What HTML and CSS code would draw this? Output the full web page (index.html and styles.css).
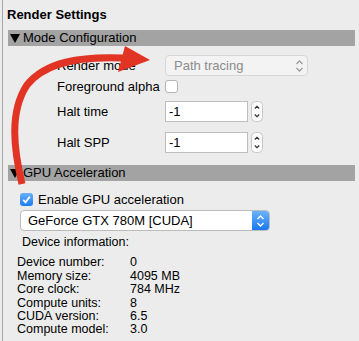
FILE: index.html
```html
<!DOCTYPE html>
<html lang="en">
<head>
    <meta charset="UTF-8">
    <meta name="viewport" content="width=device-width, initial-scale=1.0">
    <title>Render Settings</title>
    <link rel="stylesheet" href="styles.css">
</head>
<body>
    <div class="panel">
        <div class="title">Render Settings</div>

        <!-- Mode configuration group -->
        <div class="group-head"><span class="tri"></span>Mode Configuration</div>
        <div class="mode">
            <div class="row r-mode">
                <span class="label">Render mode</span>
                <div class="combo disabled">
                    <span>Path tracing</span>
                    <svg class="chev" width="9" height="14" viewBox="0 0 9 14">
                        <polyline points="1.5,5 4.5,2 7.5,5"/>
                        <polyline points="1.5,9 4.5,12 7.5,9"/>
                    </svg>
                </div>
            </div>
            <div class="row r-alpha">
                <span class="label">Foreground alpha</span>
                <span class="checkbox"></span>
            </div>
            <div class="row r-halt">
                <span class="label">Halt time</span>
                <div class="field">-1</div>
                <svg class="stepper" width="12" height="21" viewBox="0 0 12 21">
                    <rect x="0.5" y="0.5" width="11" height="20" rx="4"/>
                    <polyline points="3.8,7.5 6,5.3 8.2,7.5"/>
                    <polyline points="3.8,13.5 6,15.7 8.2,13.5"/>
                </svg>
            </div>
            <div class="row r-spp">
                <span class="label">Halt SPP</span>
                <div class="field">-1</div>
                <svg class="stepper" width="12" height="21" viewBox="0 0 12 21">
                    <rect x="0.5" y="0.5" width="11" height="20" rx="4"/>
                    <polyline points="3.8,7.5 6,5.3 8.2,7.5"/>
                    <polyline points="3.8,13.5 6,15.7 8.2,13.5"/>
                </svg>
            </div>
        </div>

        <!-- GPU group -->
        <div class="group-head gpu-head"><span class="tri"></span>GPU Acceleration</div>
        <div class="gpu">
            <div class="check-row">
                <span class="checkbox checked">
                    <svg width="13" height="13" viewBox="0 0 13 13">
                        <polyline points="3.2,6.8 5.5,9.3 9.8,3.6"/>
                    </svg>
                </span>
                <span>Enable GPU acceleration</span>
            </div>
            <div class="combo gpu-combo">
                <span>GeForce GTX 780M [CUDA]</span>
                <div class="combo-btn">
                    <svg width="9" height="14" viewBox="0 0 9 14">
                        <polyline points="1.5,5 4.5,2 7.5,5"/>
                        <polyline points="1.5,9 4.5,12 7.5,9"/>
                    </svg>
                </div>
            </div>
            <div class="info">Device information:</div>
            <div class="stats">
                <span>Device number:</span><span>0</span>
                <span>Memory size:</span><span>4095 MB</span>
                <span>Core clock:</span><span>784 MHz</span>
                <span>Compute units:</span><span>8</span>
                <span>CUDA version:</span><span>6.5</span>
                <span>Compute model:</span><span>3.0</span>
            </div>
        </div>
    </div>

    <!-- annotation arrow drawn over the panel -->
    <svg class="arrow" width="359" height="341" viewBox="0 0 359 341">
        <path d="M22,184 C14,150 9,112 27,85 C45,62 80,56 124,58"/>
        <polygon points="125,46 150,60 118,72"/>
    </svg>
</body>
</html>
```

FILE: styles.css
```css
body {
    margin: 0;
    background-color: #ececec;
    font-family: 'Liberation Sans', Arial, sans-serif;
    font-size: 13px;
    color: #000;
    overflow: hidden;
}
.panel {
    margin-left: 2px;
    border-left: 1px solid #a9a9a9;
    min-height: 100vh;
}
.title {
    padding: 7px 0 0 4px;
    font-weight: bold;
    line-height: 16px;
}
.group-head {
    display: flex;
    align-items: center;
    height: 16px;
    margin: 7px 4px 0 5px;
    background-color: #a3a3a3;
    line-height: 16px;
}
.gpu-head {
    margin-top: 12px;
}
.tri {
    width: 0;
    height: 0;
    border-left: 5.5px solid transparent;
    border-right: 5.5px solid transparent;
    border-top: 9px solid #000;
    margin: 1px 3px 0 2px;
}
.mode {
    padding-left: 54px;
}
.row {
    display: flex;
    align-items: center;
}
.label {
    width: 108px;
    flex-shrink: 0;
}
.r-mode {
    margin-top: 9px;
    height: 21px;
}
.r-alpha {
    margin-top: 2px;
    height: 17px;
}
.r-halt {
    margin-top: 6px;
    height: 21px;
}
.r-spp {
    margin-top: 10px;
    height: 21px;
}
.combo {
    display: flex;
    align-items: center;
    box-sizing: border-box;
    height: 21px;
    border: 1px solid #c4c4c4;
    border-radius: 4px;
    background-color: #fff;
    overflow: hidden;
}
.combo.disabled {
    width: 143px;
    padding-left: 8px;
    background-color: #f3f3f3;
    border-color: #d6d6d6;
    color: #8c8c8c;
}
.chev {
    margin-left: auto;
    margin-right: 3px;
}
.chev polyline {
    fill: none;
    stroke: #9c9c9c;
    stroke-width: 1.3;
}
.checkbox {
    display: inline-block;
    box-sizing: border-box;
    width: 13px;
    height: 13px;
    border: 1px solid #b4b4b4;
    border-radius: 3px;
    background-color: #fff;
}
.checkbox.checked {
    border: none;
    background: linear-gradient(#67b0fb, #1b7cf4);
}
.checkbox.checked svg {
    display: block;
}
.checkbox.checked polyline {
    fill: none;
    stroke: #fff;
    stroke-width: 1.8;
}
.field {
    box-sizing: border-box;
    width: 83px;
    height: 21px;
    padding-left: 3px;
    line-height: 19px;
    border: 1px solid #bdbdbd;
    background-color: #fff;
}
.stepper {
    margin-left: 3px;
}
.stepper rect {
    fill: #fcfcfc;
    stroke: #c6c6c6;
}
.stepper polyline {
    fill: none;
    stroke: #333;
    stroke-width: 1.2;
}
.gpu {
    padding-left: 17px;
}
.check-row {
    display: flex;
    align-items: center;
    gap: 5px;
    height: 17px;
    margin-top: 10px;
}
.gpu-combo {
    width: 250px;
    margin-top: 2px;
    padding-left: 7px;
    border-color: #bcbcbc;
}
.combo-btn {
    display: flex;
    align-items: center;
    justify-content: center;
    align-self: stretch;
    width: 17px;
    margin-left: auto;
    background: linear-gradient(#6cb3fb, #1a78f3);
}
.combo-btn polyline {
    fill: none;
    stroke: #fff;
    stroke-width: 1.4;
}
.info {
    margin-top: 5px;
    padding-left: 2px;
    font-size: 12.5px;
    line-height: 13.4px;
}
.stats {
    display: grid;
    grid-template-columns: 113px auto;
    margin: 7px 0 0 -3px;
    font-size: 12.5px;
    line-height: 13.4px;
}
.arrow {
    position: absolute;
    top: 0;
    left: 0;
    pointer-events: none;
}
.arrow path {
    fill: none;
    stroke: #e23424;
    stroke-width: 7;
}
.arrow polygon {
    fill: #e23424;
}
```
